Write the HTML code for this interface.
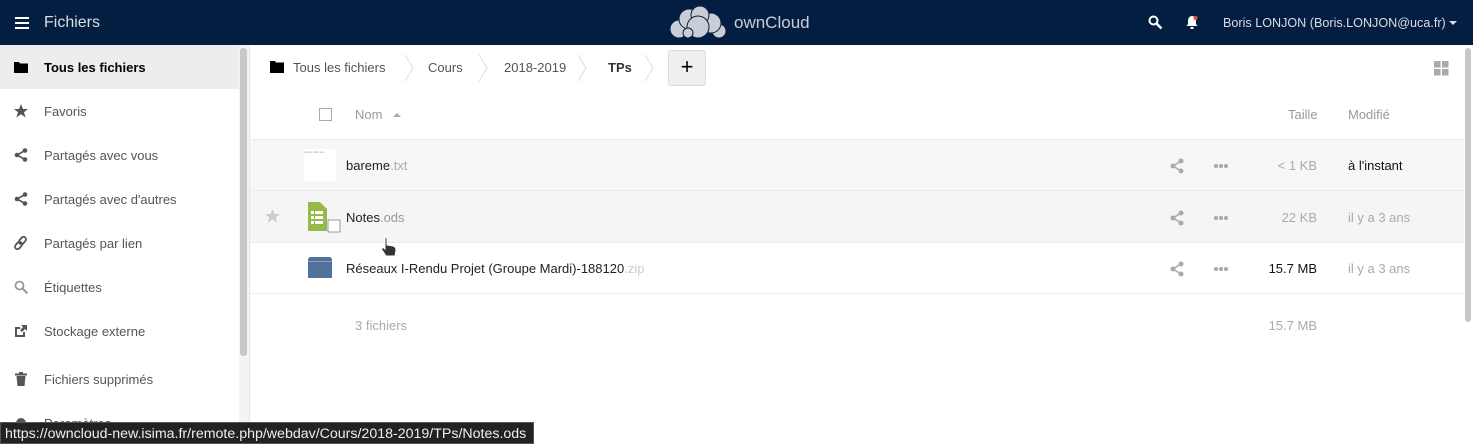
<!DOCTYPE html>
<html><head><meta charset="utf-8"><style>
*{margin:0;padding:0;box-sizing:border-box}
body{width:1473px;height:444px;overflow:hidden;background:#fff;font-family:"Liberation Sans",sans-serif;font-size:13px;color:#222;position:relative}
.a{position:absolute;white-space:nowrap}
.hdr{position:absolute;left:0;top:0;width:1473px;height:45px;background:#041e42}
.g{color:#999}.lg{color:#aaa}
.nav{position:absolute;left:0;width:239px;height:44px}
.nav span{position:absolute;left:44px;top:15px;color:#555}
.nav svg{position:absolute;left:14px;top:15px}
.row{position:absolute;left:250px;width:1214px;border-bottom:1px solid #ebebeb}
.dots{position:absolute;left:1214px;width:14px;height:4px}
.dots i{position:absolute;top:0;width:3.5px;height:3.5px;border-radius:50%;background:#aaa}
</style></head><body>
<div class="hdr"></div>
<div class="a" style="left:15px;top:17px;width:14px;height:2px;background:#fff;box-shadow:0 5px 0 #fff,0 10px 0 #fff"></div>
<div class="a" style="left:44px;top:14px;font-size:16px;color:#d8dde5">Fichiers</div>
<svg class="a" style="left:667px;top:5px" width="62" height="34" viewBox="0 0 62 34"><g fill="#c9ced6" stroke="#041e42" stroke-width="1"><circle cx="12" cy="24" r="9"/><circle cx="52" cy="26" r="7"/><circle cx="22" cy="14" r="10"/><circle cx="44" cy="18" r="10"/><circle cx="33" cy="10" r="9"/><circle cx="31" cy="22" r="11"/><circle cx="21" cy="28" r="5"/></g></svg>
<div class="a" style="left:734px;top:13px;font-size:17px;color:#c9ced6">ownCloud</div>
<svg class="a" style="left:1148px;top:15px" width="15" height="15" viewBox="0 0 15 15"><circle cx="5.5" cy="5.5" r="4" fill="none" stroke="#fff" stroke-width="2"/><path d="M8.5 8.5l5 5" stroke="#fff" stroke-width="2.5"/></svg>
<svg class="a" style="left:1186px;top:15px" width="13" height="15" viewBox="0 0 13 15"><path d="M6 1c-3 0-4 3-4 5v3l-1.5 2h11L10 9V6c0-2-1-5-4-5z" fill="#fff"/><rect x="4.5" y="12" width="3" height="2" fill="#fff"/><circle cx="9.5" cy="3" r="2" fill="#e9502f"/></svg>
<div class="a" style="left:1223px;top:16px;color:#d8dde5;font-size:12.6px">Boris LONJON (Boris.LONJON@uca.fr)</div>
<div class="a" style="left:1449px;top:21px;border:4px solid transparent;border-top:4px solid #d8dde5;border-bottom:0"></div>

<div class="a" style="left:0;top:45px;width:239px;height:44px;background:#ededed"></div>
<div class="a" style="left:239px;top:45px;width:10px;height:399px;background:#f3f3f3"></div>
<div class="a" style="left:240px;top:48px;width:7px;height:308px;background:#c8c8c8;border-radius:3px"></div>
<div class="a" style="left:249px;top:45px;width:1px;height:399px;background:#e6e6e6"></div>

<div class="nav" style="top:45px"><svg width="14" height="14"><path d="M0 2h5l1 1.5h8V13H0z" fill="#000"/></svg><span style="color:#000;font-weight:bold">Tous les fichiers</span></div>
<div class="nav" style="top:89px"><svg width="14" height="14"><path d="M7 0l2 5h5l-4 3.3 1.6 5.2L7 10.3 2.4 13.5 4 8.3 0 5h5z" fill="#555"/></svg><span>Favoris</span></div>
<div class="nav" style="top:133px"><svg width="14" height="14"><g fill="#555"><circle cx="11" cy="2.5" r="2.3"/><circle cx="3" cy="7" r="2.3"/><circle cx="11" cy="11.5" r="2.3"/></g><path d="M11 2.5L3 7l8 4.5" stroke="#555" stroke-width="1.6" fill="none"/></svg><span>Partagés avec vous</span></div>
<div class="nav" style="top:177px"><svg width="14" height="14"><g fill="#555"><circle cx="11" cy="2.5" r="2.3"/><circle cx="3" cy="7" r="2.3"/><circle cx="11" cy="11.5" r="2.3"/></g><path d="M11 2.5L3 7l8 4.5" stroke="#555" stroke-width="1.6" fill="none"/></svg><span>Partagés avec d'autres</span></div>
<div class="nav" style="top:221px"><svg width="14" height="14"><g stroke="#555" stroke-width="1.8" fill="none"><rect x="6" y="0.5" width="5" height="8" rx="2.5" transform="rotate(40 8.5 4.5)"/><rect x="2" y="5.5" width="5" height="8" rx="2.5" transform="rotate(40 4.5 9.5)"/></g></svg><span>Partagés par lien</span></div>
<div class="nav" style="top:265px"><svg width="14" height="14"><circle cx="5.5" cy="5.5" r="4" fill="none" stroke="#999" stroke-width="1.8"/><path d="M8.5 8.5l5 5" stroke="#999" stroke-width="2.2"/></svg><span>Étiquettes</span></div>
<div class="nav" style="top:309px"><svg width="14" height="14"><path d="M1 3h5v2H3v6h6V8h2v5H1z" fill="#555"/><path d="M7 1h6v6l-2-2-3 3-2-2 3-3z" fill="#555"/></svg><span>Stockage externe</span></div>
<div class="nav" style="top:357px"><svg width="14" height="14"><path d="M1 1.5h12v2H1zM5 0h4v2H5zM2.5 4h9l-1 10h-7z" fill="#555"/></svg><span>Fichiers supprimés</span></div>
<div class="nav" style="top:401px"><svg width="14" height="14"><circle cx="7" cy="7" r="5" fill="#555"/></svg><span>Paramètres</span></div>

<svg class="a" style="left:270px;top:61px" width="14" height="12"><path d="M0 0h5l1 1.5h8V12H0z" fill="#000"/></svg>
<div class="a" style="left:293px;top:60px;color:#555">Tous les fichiers</div>
<div class="a" style="left:428px;top:60px;color:#555">Cours</div>
<div class="a" style="left:504px;top:60px;color:#555">2018-2019</div>
<div class="a" style="left:608px;top:60px;color:#333;font-weight:bold">TPs</div>
<svg class="a" style="left:402px;top:54px" width="260" height="28"><g stroke="#ddd" fill="none"><path d="M3 1l8 13-8 13"/><path d="M77 1l8 13-8 13"/><path d="M176 1l8 13-8 13"/><path d="M243 1l8 13-8 13"/></g></svg>
<div class="a" style="left:668px;top:50px;width:38px;height:36px;background:#efefef;border:1px solid #ddd;border-radius:3px;font-size:22px;line-height:32px;text-align:center;color:#000">+</div>
<svg class="a" style="left:1434px;top:61px" width="15" height="15"><g fill="#aaa"><rect width="6.5" height="6.5"/><rect x="8" width="6.5" height="6.5"/><rect y="8" width="6.5" height="6.5"/><rect x="8" y="8" width="6.5" height="6.5"/></g></svg>
<div class="a" style="left:1465px;top:48px;width:6px;height:274px;background:#c8c8c8;border-radius:3px"></div>

<div class="row" style="top:89px;height:51px"></div>
<div class="a" style="left:319px;top:108px;width:13px;height:13px;border:1px solid #aaa"></div>
<div class="a g" style="left:355px;top:107px">Nom</div>
<div class="a" style="left:393px;top:113px;border:4px solid transparent;border-bottom:4px solid #aaa;border-top:0"></div>
<div class="a g" style="left:1288px;top:107px">Taille</div>
<div class="a g" style="left:1348px;top:107px">Modifié</div>

<div class="row" style="top:140px;height:51px;background:#f7f7f7"></div>
<div class="row" style="top:191px;height:52px;background:#f5f5f5"></div>
<div class="row" style="top:243px;height:51px;background:#fff"></div>

<div class="a" style="left:304px;top:149px;width:32px;height:32px;background:#fff"></div>
<div class="a" style="left:304px;top:150px;font-size:3px;color:#888">xxxxx, xxxx xxx</div>
<div class="a" style="left:346px;top:158px">bareme<span class="lg">.txt</span></div>

<svg class="a" style="left:265px;top:209px" width="15" height="15"><path d="M7.5 0l2 5h5.5l-4.3 3.3 1.7 5.5-4.9-3.3-4.9 3.3 1.7-5.5L0 5h5.5z" fill="#ccc"/></svg>
<svg class="a" style="left:307px;top:202px" width="34" height="31"><path d="M1 0h12l7 7v22H1z" fill="#94ba48"/><g fill="#fff"><rect x="4" y="9" width="3" height="3"/><rect x="8" y="9" width="8" height="3"/><rect x="4" y="14" width="3" height="3"/><rect x="8" y="14" width="8" height="3"/><rect x="4" y="19" width="3" height="3"/><rect x="8" y="19" width="8" height="3"/></g><rect x="21" y="18" width="12" height="12" fill="#fff" stroke="#999"/></svg>
<div class="a" style="left:346px;top:210px">Notes<span class="g">.ods</span></div>
<svg class="a" style="left:380px;top:236px" width="20" height="22"><path d="M5 1c1 0 2 1 2 2v6l6 1c2 .5 3 2 3 4l-1 6H6L2 14c-1-1 0-3 2-2l1 1V3c0-1 0-2 0-2z" fill="#333" stroke="#fff" stroke-width="1"/></svg>

<svg class="a" style="left:308px;top:257px" width="24" height="21"><path d="M3 0h18c2 0 3 1 3 3v18H0V3c0-2 1-3 3-3z" fill="#52719c"/><rect y="4" width="24" height="1" fill="#8aa0bf"/></svg>
<div class="a" style="left:346px;top:261px">Réseaux I-Rendu Projet (Groupe Mardi)-188120<span style="color:#ccc">.zip</span></div>

<svg class="a" style="left:1169px;top:158px" width="16" height="120"><g fill="#aaa"><circle cx="12" cy="3" r="2.5"/><circle cx="4" cy="8" r="2.5"/><circle cx="12" cy="13" r="2.5"/><circle cx="12" cy="55" r="2.5"/><circle cx="4" cy="60" r="2.5"/><circle cx="12" cy="65" r="2.5"/><circle cx="12" cy="106" r="2.5"/><circle cx="4" cy="111" r="2.5"/><circle cx="12" cy="116" r="2.5"/></g><g stroke="#aaa" stroke-width="1.6" fill="none"><path d="M12 3L4 8l8 5M12 55l-8 5 8 5M12 106l-8 5 8 5"/></g></svg>
<div class="dots" style="top:164px"><i style="left:0"></i><i style="left:5px"></i><i style="left:10px"></i></div>
<div class="dots" style="top:216px"><i style="left:0"></i><i style="left:5px"></i><i style="left:10px"></i></div>
<div class="dots" style="top:267px"><i style="left:0"></i><i style="left:5px"></i><i style="left:10px"></i></div>
<style>.r{text-align:right;width:100px;left:1217px}</style>
<div class="a r lg" style="top:158px">&lt; 1 KB</div>
<div class="a r lg" style="top:210px">22 KB</div>
<div class="a r" style="top:261px;color:#111">15.7 MB</div>
<div class="a" style="left:1348px;top:158px;color:#111">à l'instant</div>
<div class="a lg" style="left:1348px;top:210px">il y a 3 ans</div>
<div class="a lg" style="left:1348px;top:261px">il y a 3 ans</div>
<div class="a lg" style="left:355px;top:318px">3 fichiers</div>
<div class="a r lg" style="top:318px">15.7 MB</div>

<div class="a" style="left:0;top:422px;width:534px;height:22px;background:#222;border:1px solid #555;color:#eee;padding:3px 4px;font-size:14.2px">https://owncloud-new.isima.fr/remote.php/webdav/Cours/2018-2019/TPs/Notes.ods</div>
</body></html>
